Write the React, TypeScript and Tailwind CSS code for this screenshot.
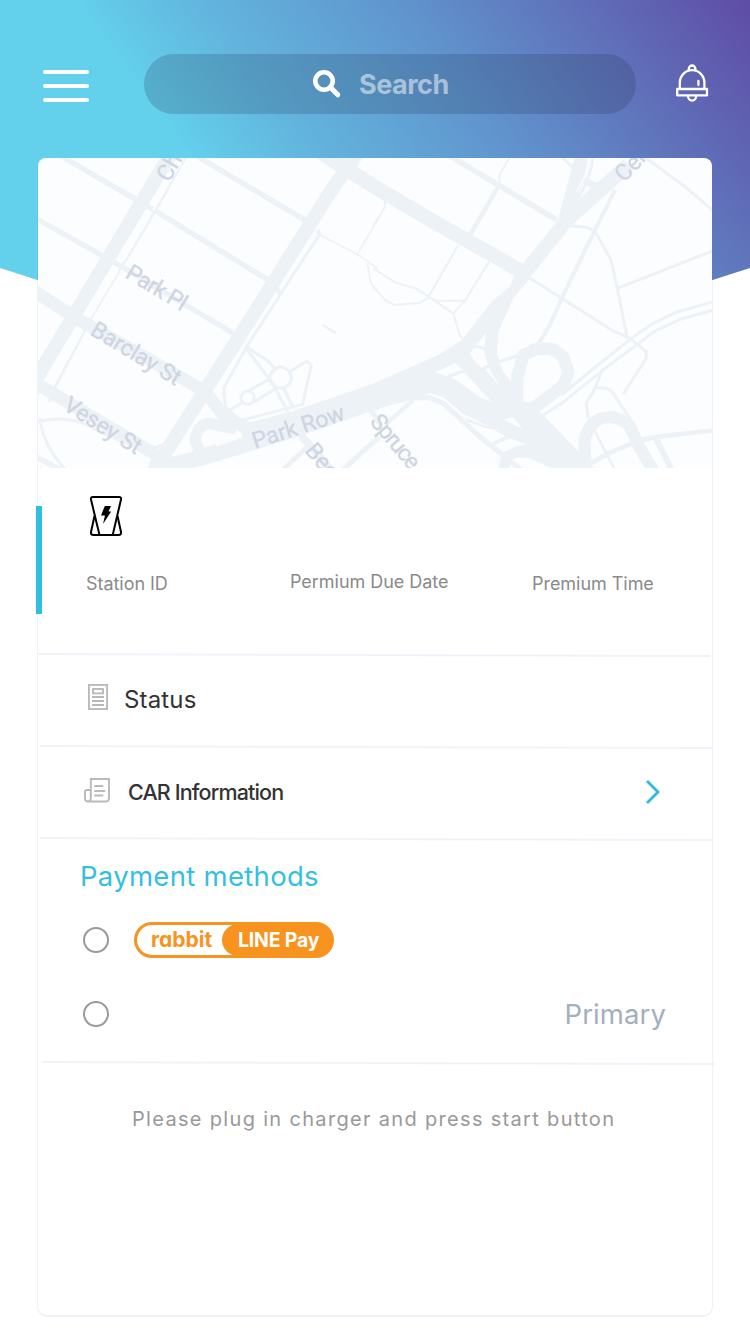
import React from "react";

function HeaderBackground() {
  return (
    <svg className="absolute left-0 top-0" width="750" height="400" viewBox="0 0 750 400">
      <defs>
        <linearGradient id="sky" gradientUnits="userSpaceOnUse" x1="74" y1="0" x2="506" y2="-321">
          <stop offset="0" stopColor="#63d0ec" />
          <stop offset="0.2" stopColor="#62b3dd" />
          <stop offset="0.5" stopColor="#6092cc" />
          <stop offset="1" stopColor="#5f4da6" />
        </linearGradient>
      </defs>
      <path d="M0 0H750V268L375 388L0 268Z" fill="url(#sky)" />
    </svg>
  );
}

function BellIcon() {
  return (
    <svg width="34" height="40" viewBox="675 63 34 40" fill="none" stroke="#fff" strokeWidth="2.300">
      <path d="M688.8 71v-2.2a3.3 3.3 0 0 1 6.6 0V71" />
      <path d="M679.8 88V82.500a12.300 12.300 0 0 1 24.600 0V88" />
      <path d="M677.200 89H707V95.300H677.200Z" strokeLinejoin="round" />
      <path d="M688 96a4.100 4.600 0 0 0 8.200 0" />
      <path d="M698.400 81v4" strokeLinecap="round" />
    </svg>
  );
}

function SearchIcon() {
  return (
    <svg width="30" height="30" viewBox="312 69 30 30" fill="none" stroke="#fff">
      <circle cx="324" cy="81" r="8.700" strokeWidth="4.600" />
      <path d="M330.500 87.500L337.800 94.800" strokeWidth="5" strokeLinecap="round" />
    </svg>
  );
}

function CityMap() {
  return (
    <svg className="block rounded-t-[8px]" width="674" height="310" viewBox="38 158 674 310">
      <rect x="38" y="158" width="674" height="310" fill="#fbfdff" />
      {/* West side: street grid, park and Park Row */}
      <g transform="translate(36 155) scale(0.33333)" fill="none" stroke="#edf2f7">
        <path d="M420 -30L10 655L-30 760" strokeWidth="42" />
        <path d="M975 -20L880 115L610 545L355 945" strokeWidth="42" />
        <path d="M-10 405L130 495L500 705" strokeWidth="38" />
        <path d="M0 685L370 905" strokeWidth="38" />
        <path d="M500 700L570 790L650 825" strokeWidth="38" />
        <path
          d="M335 945L350 895L410 905L480 885L620 845L600 800L640 803L780 765L1030 680V765L1000 770L800 840L640 890L470 940Z"
          fill="#edf2f7"
          stroke="none"
        />
        <path d="M600 822L520 805Q480 810 478 860L500 905" strokeWidth="34" />
        <g strokeWidth="16">
          <path d="M70 0L320 145L705 380" />
          <path d="M0 190L240 325L600 540" />
          <path d="M485 5L820 203" />
        </g>
        <g strokeWidth="9">
          <path d="M450 5L350 180L170 480L55 700L40 740" />
          <path d="M850 240L725 430L635 570L563 700L568 755L612 797L800 748L826 630L812 618L762 650" />
          <path d="M845 225L852 243M720 400L738 420" strokeWidth="14" />
          <path d="M630 575L695 617L720 645M630 580L710 685L755 770M743 700L772 760" strokeWidth="10" />
          <circle cx="734" cy="668" r="32" />
          <circle cx="635" cy="728" r="20" />
          <path d="M570 772L618 743M638 707L700 673M655 740L715 703" />
          <path d="M5 800Q110 775 190 830L330 890L400 860M12 790Q20 870 90 945" />
          <path d="M0 905L75 945" strokeWidth="16" />
        </g>
        <path d="M852 240L964 298L1025 340M1030 185L964 298M994 325L1005 385L1025 410" strokeWidth="5" />
        <path d="M860 510L900 535" strokeWidth="7" />
        <path d="M795 840L880 940" strokeWidth="24" />
        <path d="M815 875L740 945" strokeWidth="15" />
        <path d="M1030 845L920 945" strokeWidth="15" />
        <path d="M1000 760L1035 810" strokeWidth="16" />
        <path d="M0 40L25 0" strokeWidth="9" />
        <path
          d="M442 12L395 90L352 165M340 185L262 318M246 345L162 487M140 527L50 692M843 238L734 395M722 425L642 535"
          stroke="#fbfdff"
          strokeWidth="6"
        />
        <path d="M500 865Q505 830 530 827L605 842L560 855Z" fill="#fbfdff" stroke="none" />
        <path d="M540 872L620 845M415 900L465 888" stroke="#fbfdff" strokeWidth="5" />
      </g>
      {/* East side: bridge interchange */}
      <g transform="translate(375 155) scale(0.33333)" fill="none" stroke="#edf2f7">
        <path d="M-180 -20L-90 40L35 117L180 202L445 352" strokeWidth="44" />
        <path d="M625 -10L568 205L440 365" strokeWidth="42" />
        <path d="M760 30L575 195" strokeWidth="44" />
        <path d="M220 0L545 195" strokeWidth="17" />
        <path
          d="M-30 695L0 683L190 600L260 555L355 435L405 395L425 340L475 345L465 370L415 430L370 530L365 595L385 650L412 685L430 735L468 745L505 780L615 895L665 945H540L465 910L400 905L460 870L405 850L345 820L285 800L205 730L165 715L110 735L45 750L0 765L-30 772Z"
          fill="#edf2f7"
          stroke="none"
        />
        <path d="M427 755V665L445 600L485 582H530L565 605L580 650L567 690L465 768" strokeWidth="37" strokeLinejoin="round" />
        <path d="M632 935L628 855Q645 800 680 790Q730 775 765 815L795 880L840 955" strokeWidth="36" />
        <path d="M385 945L395 905L430 888L490 882" strokeWidth="32" />
        <path d="M180 652L250 620L370 747L320 730L235 670Z" fill="#fbfdff" stroke="none" />
        <path d="M245 605L375 745" strokeWidth="30" />
        <path d="M285 595L332 533L328 590L340 635L375 693L300 620Z" fill="#fbfdff" stroke="none" />
        <path d="M385 793L415 787L442 822Z" fill="#fbfdff" stroke="none" />
        <path d="M163 717L205 730L265 780L330 812L372 825" stroke="#fbfdff" strokeWidth="6" />
        <path d="M220 665L260 650L300 643M320 645L350 627L420 605L470 575M300 573L335 582" strokeWidth="10" />
        <path d="M325 640L370 695" strokeWidth="5" />
        <path d="M115 728L165 728L205 745L320 850L440 945" strokeWidth="15" />
        <path d="M115 735L30 810" strokeWidth="13" />
        <path d="M275 795L330 815L400 825" strokeWidth="7" />
        <path d="M355 865L415 840" strokeWidth="12" />
        <path d="M370 95L285 240" strokeWidth="14" />
        <path d="M405 5L373 60V95M30 130V155L-5 212" strokeWidth="6" />
        <path d="M560 5L600 45M655 0Q650 60 610 130" strokeWidth="8" />
        <path d="M625 70Q650 100 700 90" strokeWidth="20" />
        <path d="M800 0L930 95L1015 168" strokeWidth="9" />
        <path d="M720 105L655 235L560 430Q520 530 480 580" strokeWidth="12" />
        <path d="M575 210L640 218L665 238L708 315L727 400L757 550M727 400L1015 287" strokeWidth="9" />
        <path d="M465 370L710 525L765 550L814 590V610L745 717" strokeWidth="9" />
        <path d="M560 720L650 645L765 553L830 508L900 473L1015 440M500 783L560 745L690 640L840 528L915 493L1015 465" strokeWidth="9" />
        <path
          d="M-5 340L60 382L125 402L235 475L252 535L265 555M-5 395L30 435L58 450L135 443L162 427L180 437H270M250 270L160 425M342 320L270 437L235 475"
          strokeWidth="6"
        />
        <path d="M685 640L655 710L633 745L640 790M665 700Q705 695 715 715L780 815" strokeWidth="9" />
        <path d="M650 925L700 895L790 857L850 845L1015 826" strokeWidth="14" />
        <path d="M655 820L720 945" strokeWidth="8" />
        <path d="M840 845L890 945" strokeWidth="18" />
        <path d="M640 5L635 55L605 110" stroke="#fbfdff" strokeWidth="5" />
      </g>
      <g fill="#cfd5e2" stroke="#cfd5e2" strokeWidth="0.300" className="font-[Roboto,sans-serif] text-[23px]">
        <text transform="translate(169 183) rotate(-60)">Ch</text>
        <text transform="translate(124 277) rotate(31)" textLength="67">Park Pl</text>
        <text transform="translate(89 334) rotate(31)" textLength="101">Barclay St</text>
        <text transform="translate(62 409) rotate(32)" textLength="87">Vesey St</text>
        <text transform="translate(255 449) rotate(-18)" textLength="96">Park Row</text>
        <text transform="translate(304 451) rotate(50)">Bee</text>
        <text transform="translate(369 422) rotate(50)" textLength="64">Spruce</text>
        <text transform="translate(624 183) rotate(-46)">Cen</text>
      </g>
    </svg>
  );
}

function StationIcon() {
  return (
    <svg width="34" height="42" viewBox="89 495 34 42" fill="none" stroke="#000" strokeWidth="2" strokeLinejoin="round">
      <path d="M99.500 535L91 499.500Q90.500 497 93 497H119Q121.500 497 121 499.500L112.700 535" />
      <path d="M94.500 516L91 532Q90.500 535 93.500 535H118.500Q121.500 535 121 532L117.500 516" />
      <path d="M104.800 506H111L108.500 511.500H111.200L103 524L105 515.500H101Z" fill="#000" stroke="none" />
    </svg>
  );
}

function StatusIcon() {
  return (
    <svg width="20" height="26" viewBox="0 0 20 26" fill="none" stroke="#b9b9b9" strokeWidth="1.900">
      <rect x="0.900" y="0.900" width="18.200" height="24.200" />
      <rect x="5" y="5" width="10" height="4.400" />
      <path d="M4 13H16M4 17H16M4 21H16" />
    </svg>
  );
}

function PaperIcon() {
  return (
    <svg width="26" height="25" viewBox="0 0 26 25" fill="none" stroke="#b9b9b9" strokeWidth="1.900">
      <path d="M6.800 20.500V1H25V20Q25 23.500 21.500 23.500H4Q1 23.500 1 20.500V14Q1 12 3 12H6.800M6.800 20Q6.800 23.500 4 23.500" />
      <path d="M11 8H18.500M11 13H20.500M11 17.500H18.500" strokeLinecap="round" />
    </svg>
  );
}

function Divider({ className }: { className: string }) {
  return <div className={`h-[2px] w-[673px] shrink-0 rotate-[0.17deg] bg-[#eff4fb] ${className}`} />;
}

function Radio() {
  return <span className="block size-[26px] rounded-full border-2 border-[#999]" />;
}

function RabbitLinePay() {
  return (
    <span className="flex h-[36px] w-[200px] rounded-full bg-[#f7931e] p-[3px]">
      <span className="w-[104px] rounded-l-full bg-white pl-[14px] text-[21px] font-bold leading-[30px] text-[#f7931e] [font-feature-settings:'cv11']">
        rabbit
      </span>
      <span className="-my-px -ml-[19px] flex-1 rounded-full bg-[#f7931e] pl-[16px] text-[19.500px] font-bold leading-[33px] tracking-[-0.2px] text-white">
        LINE Pay
      </span>
    </span>
  );
}

export default function App() {
  return (
    <div className="relative flex h-[1334px] w-[750px] flex-col overflow-hidden bg-white font-[Inter,sans-serif]">
      <HeaderBackground />
      <header className="relative flex h-[158px] shrink-0 items-start pl-[43px]">
        <div className="mt-[70px] flex w-[46px] flex-col gap-[10px]">
          <span className="h-[4px] rounded-full bg-white" />
          <span className="h-[4px] rounded-full bg-white" />
          <span className="h-[4px] rounded-full bg-white" />
        </div>
        <div className="ml-[55px] mt-[54px] flex h-[60px] w-[492px] items-center rounded-full bg-[#1d2f4a]/20 pl-[168px]">
          <SearchIcon />
          <span className="ml-[17px] pt-[2px] text-[27px] font-bold tracking-[-0.5px] text-white/50">Search</span>
        </div>
        <div className="ml-[39px] mt-[63px]">
          <BellIcon />
        </div>
      </header>
      <main className="relative mx-[37px] flex h-[1159px] w-[676px] shrink-0 flex-col rounded-[10px] border-x border-b-2 border-[#6464f0]/10 bg-white bg-clip-padding">
        <CityMap />
        <section className="relative h-[186px] shrink-0 pl-[48px] pt-[27px]">
          <div className="absolute -left-[2px] top-[38px] h-[108px] w-[6px] bg-[#2fbfe0]" />
          <div className="pl-[3px]">
            <StationIcon />
          </div>
          <div className="mt-[33px] flex items-start text-[18px] leading-[24px] tracking-[-0.04px] text-[#8a8a8a]">
            <span className="w-[204px] pt-[2px]">Station ID</span>
            <span className="w-[242px]">Permium Due Date</span>
            <span className="pt-[2px]">Premium Time</span>
          </div>
        </section>
        <Divider className="-ml-px" />
        <section className="flex h-[90px] shrink-0 items-center pb-[2px] pl-[50px]">
          <div className="-mt-[6px]">
            <StatusIcon />
          </div>
          <h2 className="ml-[16px] text-[24px] tracking-[0.15px] text-[#333]">Status</h2>
        </section>
        <Divider className="ml-[2px]" />
        <section className="flex h-[90px] shrink-0 items-center pb-[2px] pl-[46px]">
          <div className="-mt-[4px]">
            <PaperIcon />
          </div>
          <h2 className="ml-[18px] text-[21.500px] font-medium tracking-[-0.86px] text-[#333]">CAR Information</h2>
          <svg className="ml-auto mr-[50px]" width="18" height="26" viewBox="0 0 18 26" fill="none" stroke="#2fb9da" strokeWidth="2.800">
            <path d="M3 2L14 13L3 24" />
          </svg>
        </section>
        <Divider className="ml-[2px]" />
        <section className="h-[222px] shrink-0 pl-[42px] pt-[18px]">
          <h2 className="pt-px text-[27.500px] leading-[35px] tracking-[0.3px] text-[#34bfe0]">Payment methods</h2>
          <div className="mt-[28px] flex items-center gap-[25px] pl-[3px]">
            <Radio />
            <RabbitLinePay />
          </div>
          <div className="mt-[38px] flex h-[36px] items-center justify-between pl-[3px] pr-[46px]">
            <Radio />
            <span className="pt-px text-[27.500px] tracking-[0.1px] text-[#a4afbe]">Primary</span>
          </div>
        </section>
        <Divider className="ml-[4px]" />
        <p className="pl-[94px] pt-[41px] text-[20px] leading-[28px] tracking-[1.32px] text-[#999]">
          Please plug in charger and press start button
        </p>
      </main>
    </div>
  );
}
